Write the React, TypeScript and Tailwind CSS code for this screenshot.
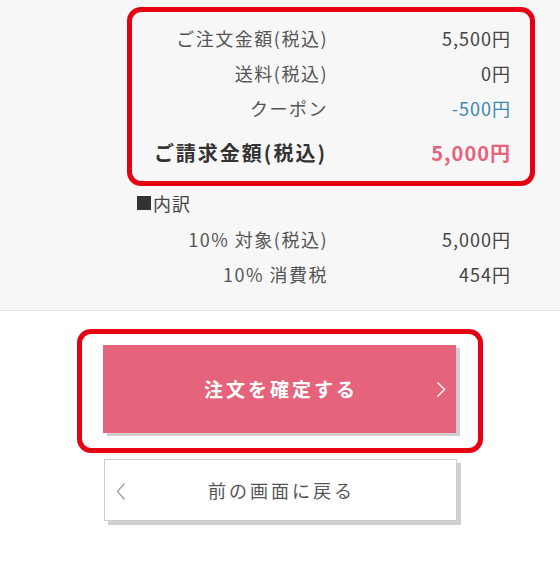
const font = { fontFamily: '"Noto Sans CJK JP", "Noto Sans", sans-serif' };

const Row = ({ label, value, valueClass = 'text-[#444]' }: { label: string; value: string; valueClass?: string }) => (
  <div className="flex h-[35px] items-center">
    <div className="w-[196px] text-right text-[18px] tracking-[1.5px] text-[#555]">{label}</div>
    <div className={`flex-1 pr-[19px] text-right text-[18px] tracking-[1px] ${valueClass}`}>{value}</div>
  </div>
);

export default function App() {
  return (
    <div className="min-h-[561px] w-[560px] bg-white" style={font}>
      <section className="border-b border-[#e6e6e6] bg-[#f7f7f7] pb-[18px] pt-[7px]">
        <div className="ml-[127px] w-[408px]">
          <div className="rounded-[14px] border-[5px] border-[#e60012] pb-[3px] pt-[9px]">
            <Row label="ご注文金額(税込)" value="5,500円" />
            <Row label="送料(税込)" value="0円" />
            <Row label="クーポン" value="-500円" valueClass="text-[#3a87b5]" />
            <div className="mt-[2px] flex h-[50px] items-center">
              <div className="w-[195px] text-right text-[20px] font-bold tracking-[2px] text-[#333]">ご請求金額(税込)</div>
              <div className="flex-1 pr-[19px] text-right text-[20px] font-bold tracking-[1px] text-[#e5637b]">5,000円</div>
            </div>
          </div>
          <div className="px-[5px]">
            <div className="flex h-[34px] items-center pl-[5px] text-[18px] tracking-[1px] text-[#444]">
              <span className="mr-[2px] inline-block h-[14px] w-[14px] bg-[#333]" />
              内訳
            </div>
            <div className="mt-[2px]">
              <Row label="10% 対象(税込)" value="5,000円" />
              <Row label="10% 消費税" value="454円" />
            </div>
          </div>
        </div>
      </section>

      <div className="mx-auto mt-[18px] w-[406px] rounded-[14px] border-[5px] border-[#e60012] pb-[15px] pl-[21px] pt-[11px]">
        <button className="relative flex h-[88px] w-[353px] items-center justify-center bg-[#e5637b] shadow-[4px_3px_0_#cfcfcf]">
          <span className="pl-[3px] text-[19px] font-bold tracking-[3px] text-white">注文を確定する</span>
          <svg className="absolute right-[10px] top-[37px]" width="10" height="15" viewBox="0 0 10 15" fill="none">
            <polyline points="1.5,0.5 8.5,7.5 1.5,14.5" stroke="#fff" strokeWidth="1.4" />
          </svg>
        </button>
      </div>

      <button className="relative mx-auto mt-[6px] flex h-[62px] w-[353px] items-center justify-center border border-[#cccccc] bg-white shadow-[4px_4px_0_#d0d0d0]">
        <svg className="absolute left-[11px] top-[23px]" width="10" height="17" viewBox="0 0 10 17" fill="none">
          <polyline points="8.5,0.5 1.5,8.5 8.5,16.5" stroke="#999" strokeWidth="1.2" />
        </svg>
        <span className="pl-[3px] text-[18px] tracking-[3px] text-[#555]">前の画面に戻る</span>
      </button>
    </div>
  );
}
